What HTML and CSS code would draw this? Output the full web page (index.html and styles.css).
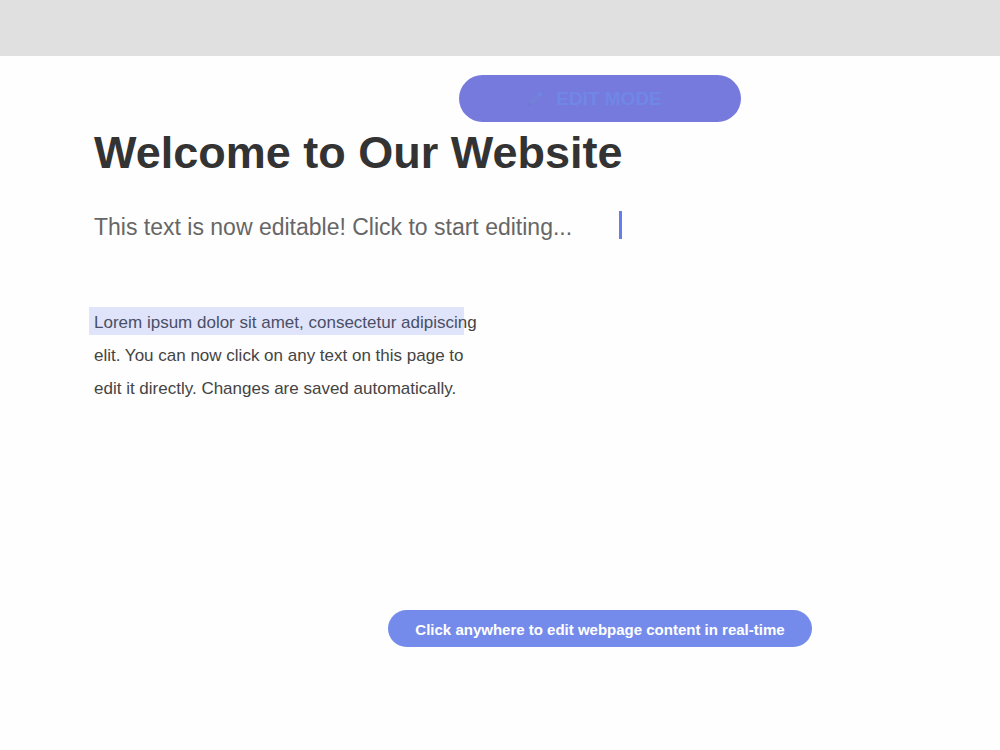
FILE: index.html
```html
<!DOCTYPE html>
<html lang="en">
<head>
    <meta charset="UTF-8">
    <title>Welcome to Our Website</title>
    <link rel="stylesheet" href="styles.css">
</head>
<body>
    <header class="topbar"></header>
    <main class="page">
        <div class="center-row">
            <button type="button" class="edit-mode">
                <svg class="pencil" viewBox="0 0 18 18" aria-hidden="true">
                    <path class="pencil-body" d="M3 12 L10 5 L13 8 L6 15 Z"/>
                    <path class="pencil-tip" d="M3 12 L6 15 L1 17 Z"/>
                    <path class="pencil-end" d="M11 4 L13 2 Q16 3 16 6 L14 7 Z"/>
                </svg>
                EDIT MODE
            </button>
        </div>

        <section class="intro">
            <h1 contenteditable="true">Welcome to Our Website</h1>
            <div class="subtitle">
                <p contenteditable="true">This text is now editable! Click to start editing...</p>
                <span class="caret"></span>
            </div>
        </section>

        <section class="copy">
            <p contenteditable="true">Lorem ipsum dolor sit amet, consectetur adipiscing elit. You can now click on any text on this page to edit it directly. Changes are saved automatically.</p>
            <span class="selection"></span>
        </section>

        <div class="center-row">
            <div class="hint">Click anywhere to edit webpage content in real-time</div>
        </div>
    </main>
</body>
</html>
```

FILE: styles.css
```css
body {
    margin: 0;
    background: #fefefe;
    font-family: "Liberation Sans", Arial, sans-serif;
}

h1, p {
    margin: 0;
    outline: none;
}

.topbar {
    height: 56px;
    background: #e0e0e0;
}

.page {
    padding: 19px 0 40px 94px;
}

/* pills are centred a little to the right of the page middle */
.center-row {
    display: flex;
    justify-content: center;
    padding-left: 106px;
}

.edit-mode {
    display: flex;
    align-items: center;
    justify-content: center;
    gap: 12px;
    width: 282px;
    height: 47px;
    padding: 0 12px 0 0;
    border: none;
    border-radius: 24px;
    background: #757adc;
    color: #7087e7;
    font-family: inherit;
    font-size: 19px;
    font-weight: bold;
    cursor: pointer;
}

.pencil {
    width: 18px;
    height: 18px;
}

.pencil-body { fill: #7280d8; }
.pencil-tip { fill: #7078d6; }
.pencil-end { fill: #6f87e4; }

.intro {
    width: fit-content;
}

h1 {
    color: #333;
    font-size: 45px;
    line-height: 62px;
}

.subtitle {
    display: flex;
    justify-content: space-between;
    margin-top: 27px;
    color: #666;
    font-size: 23px;
    line-height: 32px;
}

.caret {
    width: 3px;
    height: 28px;
    background: #667eea;
}

.copy {
    position: relative;
    width: 384px;
    margin: 63px 0 205px;
    color: #444;
    font-size: 17px;
    line-height: 33px;
}

.selection {
    position: absolute;
    top: 1px;
    left: -5px;
    width: 375px;
    height: 28px;
    background: rgba(102, 126, 234, 0.2);
    pointer-events: none;
}

.hint {
    padding: 3px 27px 0;
    border-radius: 19px;
    background: #758beb;
    color: #fff;
    font-size: 15px;
    font-weight: bold;
    line-height: 34px;
}
```
